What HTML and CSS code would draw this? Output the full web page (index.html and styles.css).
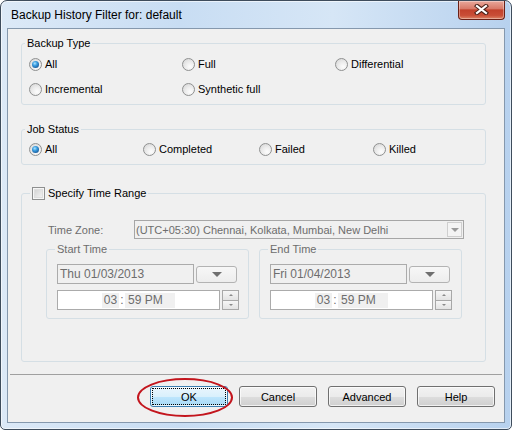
FILE: index.html
```html
<!DOCTYPE html>
<html lang="en">
<head>
  <meta charset="UTF-8" />
  <title>Backup History Filter</title>
  <link rel="stylesheet" href="styles.css">
</head>
<body>

<div class="window">
  <!-- Title bar -->
  <div class="titlebar">
    <span class="title">Backup History Filter for: default</span>
    <button class="close" aria-label="Close">
      <svg width="15" height="11" viewBox="0 0 15 11">
        <path d="M3 2 L12 9 M12 2 L3 9" stroke="#4a2018" stroke-width="4.2" stroke-linecap="square" fill="none"/>
        <path d="M3 2 L12 9 M12 2 L3 9" stroke="#fff" stroke-width="2.2" stroke-linecap="square" fill="none"/>
      </svg>
    </button>
  </div>

  <div class="client">
    <div class="body">

      <!-- Backup Type -->
      <fieldset class="group types">
        <legend>Backup Type</legend>
        <div class="opts">
          <label class="opt"><span class="radio on"></span>All</label>
          <label class="opt"><span class="radio"></span>Full</label>
          <label class="opt"><span class="radio"></span>Differential</label>
          <label class="opt"><span class="radio"></span>Incremental</label>
          <label class="opt"><span class="radio"></span>Synthetic full</label>
        </div>
      </fieldset>

      <!-- Job Status -->
      <fieldset class="group status">
        <legend>Job Status</legend>
        <div class="opts">
          <label class="opt"><span class="radio on"></span>All</label>
          <label class="opt"><span class="radio"></span>Completed</label>
          <label class="opt"><span class="radio"></span>Failed</label>
          <label class="opt"><span class="radio"></span>Killed</label>
        </div>
      </fieldset>

      <!-- Time range -->
      <fieldset class="group range">
        <legend><label class="check-label"><span class="check"></span>Specify Time Range</label></legend>

        <div class="zone-row">
          <span class="muted zone-label">Time Zone:</span>
          <div class="combo">
            <span>(UTC+05:30) Chennai, Kolkata, Mumbai, New Delhi</span>
            <span class="combo-btn"></span>
          </div>
        </div>

        <div class="times">
          <fieldset class="group sub">
            <legend class="muted">Start Time</legend>
            <div class="date-row">
              <div class="field date">Thu 01/03/2013</div>
              <span class="drop"></span>
            </div>
            <div class="time-row">
              <div class="field time">
                <span class="hl hh">03</span><span class="sep">:</span><span class="hl mm">59 PM</span>
              </div>
              <span class="spin"><span class="up"></span><span class="down"></span></span>
            </div>
          </fieldset>

          <fieldset class="group sub">
            <legend class="muted">End Time</legend>
            <div class="date-row">
              <div class="field date">Fri 01/04/2013</div>
              <span class="drop"></span>
            </div>
            <div class="time-row">
              <div class="field time">
                <span class="hl hh">03</span><span class="sep">:</span><span class="hl mm">59 PM</span>
              </div>
              <span class="spin"><span class="up"></span><span class="down"></span></span>
            </div>
          </fieldset>
        </div>
      </fieldset>
    </div>

    <div class="rule"></div>

    <!-- Dialog buttons -->
    <div class="actions">
      <button class="btn default"><span>OK</span></button>
      <button class="btn">Cancel</button>
      <button class="btn">Advanced</button>
      <button class="btn">Help</button>
    </div>
  </div>

  <!-- hand-drawn highlight round the OK button -->
  <div class="mark"></div>
</div>

</body>
</html>
```

FILE: styles.css
```css
html, body {
  margin: 0; padding: 0;
}

body {
  width: 512px; height: 430px;
  overflow: hidden;
  background: #fff;
  font-family: "Liberation Sans", Arial, sans-serif;
  font-size: 11px;
  color: #000;
}

/* Window frame */
.window {
  position: relative;
  box-sizing: border-box;
  width: 512px; height: 430px;
  border: 1px solid #3e4c5c;
  border-radius: 7px 7px 5px 5px;
  padding: 0 6px 6px;
  background: linear-gradient(to right, #dce9f7 0%, #c8ddf3 35%, #d6e6f6 65%, #b7d1ee 100%);
  box-shadow: inset 0 0 0 1px rgba(255, 255, 255, 0.6);
  display: flex;
  flex-direction: column;
}

.titlebar {
  height: 27px;
  display: flex;
  align-items: flex-start;
}

.title {
  flex: 1;
  margin: 6px 0 0 4px;
  font-size: 12px;
  line-height: 16px;
  color: #000;
}

.close {
  width: 47px; height: 19px;
  margin: 0; padding: 0;
  border: 1px solid #6b2016;
  border-top: none;
  border-radius: 0 0 4px 4px;
  background: linear-gradient(#e9a89b 0%, #d97a69 42%, #c2412c 50%, #c94e37 80%, #dc8466 100%);
  box-shadow: inset 0 0 0 1px rgba(255, 255, 255, 0.35);
  display: flex;
  align-items: center;
  justify-content: center;
}

.close svg { display: block; margin-top: -1px; }

/* Client area */
.client {
  flex: 1;
  border: 1px solid #8598ad;
  background: #f0f0f0;
  display: flex;
  flex-direction: column;
}

.body { padding: 8px 18px 0 13px; }

.group {
  margin: 0;
  padding: 0;
  min-width: 0;
  border: 1px solid #d5dfe5;
  border-radius: 3px;
}

.group legend {
  padding: 0 2px;
  margin-left: 3px;
  line-height: 13px;
}

.muted { color: #6d6d6d; }

/* Radio options */
.opts { display: grid; }

.types .opts {
  grid-template-columns: repeat(3, 153px);
  grid-auto-rows: 25px;
  padding: 2px 0 2px 7px;
}

.status { margin-top: 18px; }

.status .opts {
  grid-template-columns: 114px 116px 114px 114px;
  grid-auto-rows: 26px;
  padding: 0 0 2px 7px;
}

.opt {
  display: flex;
  align-items: center;
  gap: 3px;
  line-height: 13px;
}

.radio {
  position: relative;
  box-sizing: border-box;
  width: 13px; height: 13px;
  border: 1px solid #8f9090;
  border-radius: 50%;
  background: radial-gradient(circle at 65% 70%, #fdfdfd 0, #ececec 45%, #d2d2d2 100%);
}

.radio.on::after {
  content: "";
  position: absolute;
  left: 2px; top: 2px;
  width: 7px; height: 7px;
  border-radius: 50%;
  background: radial-gradient(circle at 40% 35%, #aee4ff 0, #3b9ee0 35%, #1a5d9e 75%, #16446f 100%);
}

/* Time range */
.range { margin-top: 22px; }

.range legend { margin-left: 8px; }

.check-label {
  display: flex;
  align-items: center;
  gap: 3px;
}

.check {
  box-sizing: border-box;
  width: 13px; height: 13px;
  border: 1px solid #8e8f8f;
  background: linear-gradient(135deg, #cdcdcd, #f9f9f9);
  box-shadow: inset 0 0 0 1px #f6f6f6, inset 0 0 0 2px #dedede;
}

.zone-row {
  display: flex;
  align-items: center;
  padding: 20px 0 0 26px;
}

.zone-label { width: 86px; }

.combo {
  box-sizing: border-box;
  width: 330px; height: 19px;
  border: 1px solid #a6a6a6;
  padding-left: 1px;
  display: flex;
  align-items: center;
  color: #6d6d6d;
}

.combo-btn {
  margin-left: auto;
  margin-right: 1px;
  box-sizing: border-box;
  width: 15px; height: 15px;
  border: 1px solid #cfcfcf;
  background: #f4f4f4;
  display: flex;
  align-items: center;
  justify-content: center;
}

.combo-btn::before {
  content: "";
  border-left: 4px solid transparent;
  border-right: 4px solid transparent;
  border-top: 4px solid #9a9a9a;
}

.times {
  display: flex;
  gap: 10px;
  padding: 4px 0 42px 24px;
}

.sub { width: 203px; box-sizing: border-box; }

.date-row {
  display: flex;
  gap: 2px;
  padding: 8px 0 0 10px;
}

.field {
  box-sizing: border-box;
  height: 20px;
  border: 1px solid #ababab;
  font-size: 12px;
  color: #6d6d6d;
}

.date {
  width: 137px;
  padding-left: 2px;
  display: flex;
  align-items: center;
}

.drop {
  box-sizing: border-box;
  width: 41px; height: 17px;
  margin-top: 2px;
  border: 1px solid #b3b3b3;
  border-radius: 3px;
  background: linear-gradient(#f7f7f7, #ededed);
  display: flex;
  align-items: center;
  justify-content: center;
}

.drop::before {
  content: "";
  border-left: 5px solid transparent;
  border-right: 5px solid transparent;
  border-top: 5px solid #6f6f6f;
}

.time-row {
  display: flex;
  gap: 2px;
  padding: 6px 0 8px 10px;
}

.time {
  width: 163px;
  background: #fff;
  display: flex;
  align-items: center;
  justify-content: center;
}

.hl {
  height: 15px;
  line-height: 15px;
  background: #f0f0f0;
}

.hh { width: 17px; text-align: center; }
.sep { width: 6px; text-align: center; line-height: 15px; }
.mm { box-sizing: border-box; width: 50px; padding-left: 3px; }

.spin {
  width: 17px; height: 20px;
  display: flex;
  flex-direction: column;
}

.spin span {
  flex: 1;
  border: 1px solid #a8a8a8;
  background: linear-gradient(#f6f6f6, #e3e3e3);
  display: flex;
  align-items: center;
  justify-content: center;
}

.spin .down { border-top: none; }

.spin .up::before,
.spin .down::before {
  content: "";
  border-left: 2px solid transparent;
  border-right: 2px solid transparent;
}

.spin .up::before { border-bottom: 2px solid #8a8a8a; }
.spin .down::before { border-top: 2px solid #8a8a8a; }

/* Bottom buttons */
.rule {
  margin: 12px 2px 0;
  border-top: 1px solid #a0a0a0;
}

.actions {
  display: flex;
  justify-content: flex-end;
  gap: 11px;
  padding: 11px 9px 0 0;
}

.btn {
  box-sizing: border-box;
  width: 78px; height: 21px;
  margin: 0; padding: 0;
  border: 1px solid #707070;
  border-radius: 3px;
  background: linear-gradient(#f2f2f2 0%, #ebebeb 50%, #dddddd 51%, #cfcfcf 100%);
  box-shadow: inset 0 0 0 1px rgba(255, 255, 255, 0.7);
  font-family: inherit;
  font-size: 11px;
  color: #000;
}

.btn.default {
  border-color: #3c7fb1;
  background: linear-gradient(#eaf6fd 0%, #d9f0fc 50%, #bee6fd 51%, #a7d9f5 100%);
  outline: 1px dotted #000;
  outline-offset: -3px;
}

.mark {
  position: absolute;
  left: 136px; top: 377px;
  box-sizing: border-box;
  width: 96px; height: 39px;
  border: 2px solid #c3151d;
  border-radius: 50%;
}
```
